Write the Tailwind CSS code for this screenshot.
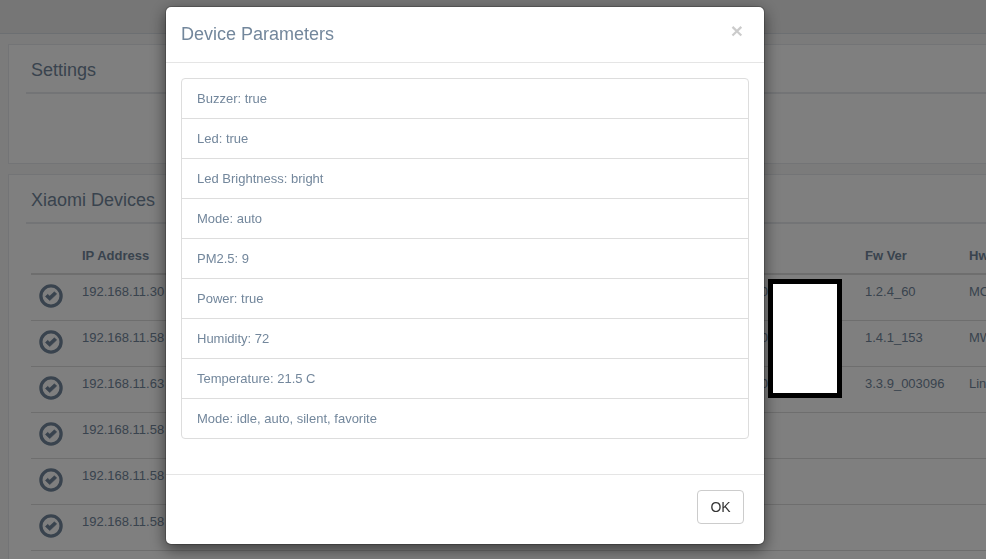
<!DOCTYPE html>
<html lang="en">
<head>
<meta charset="utf-8">
<title>Xiaomi Devices</title>
<script src="https://cdn.jsdelivr.net/npm/@tailwindcss/browser@4"></script>
</head>
<body class="h-screen overflow-hidden bg-[#f7f7f7] font-['Liberation_Sans',Arial,sans-serif] text-[13px] leading-[19px] text-[#73879c]">
<svg class="hidden" aria-hidden="true">
  <symbol id="check" viewBox="0 0 24 24">
    <circle cx="12" cy="12" r="10.100" fill="none" stroke="currentColor" stroke-width="3.300"/>
    <path fill="currentColor" stroke="currentColor" stroke-width="0.600" stroke-linejoin="round" d="M6.400 12.500L8.600 10.300L10.700 12.100L15.400 7.700L17.700 10L10.700 16.600Z"/>
  </symbol>
</svg>

<header class="h-[34px] border-b border-[#d9dee4] bg-[#ededed]"></header>

<main class="flex flex-col gap-2.5 pt-2.5 pl-2">
  <section class="min-h-[120px] border border-r-0 border-[#e6e9ed] bg-white pt-2.5 pb-2.5 pl-[17px]">
    <h2 class="h-[39px] border-b-2 border-[#e6e9ed] pt-1 pl-[5px] text-[18px] leading-[22px]">Settings</h2>
  </section>

  <section class="border border-r-0 border-[#e6e9ed] bg-white pt-2.5 pb-12 pl-[17px]">
    <h2 class="h-[39px] border-b-2 border-[#e6e9ed] pt-1 pl-[5px] text-[18px] leading-[22px]">Xiaomi Devices</h2>
    <div class="mt-3.5 pl-[5px]">
      <table class="w-full table-fixed border-separate border-spacing-0 text-left [&_td]:whitespace-nowrap [&_td]:border-b [&_td]:border-[#ddd] [&_td]:px-2 [&_td]:pt-[7px] [&_td]:pb-[19px] [&_td]:align-top [&_th]:whitespace-nowrap [&_th]:border-b-2 [&_th]:border-[#ddd] [&_th]:p-2">
        <colgroup><col class="w-[43px]"><col class="w-[240px]"><col><col class="w-[81px]"><col class="w-[104px]"><col class="w-[25px]"></colgroup>
        <thead>
          <tr><th></th><th>IP Address</th><th></th><th></th><th>Fw Ver</th><th>Hw</th></tr>
        </thead>
        <tbody>
          <tr><td><svg class="mt-0.5 -mb-[7px] size-6"><use href="#check"/></svg></td><td>192.168.11.30</td><td class="text-right">0</td><td></td><td>1.2.4_60</td><td>MC</td></tr>
          <tr><td><svg class="mt-0.5 -mb-[7px] size-6"><use href="#check"/></svg></td><td>192.168.11.58</td><td class="text-right">0</td><td></td><td>1.4.1_153</td><td>MW</td></tr>
          <tr><td><svg class="mt-0.5 -mb-[7px] size-6"><use href="#check"/></svg></td><td>192.168.11.63</td><td class="text-right">0</td><td></td><td>3.3.9_003096</td><td>Lin</td></tr>
          <tr><td><svg class="mt-0.5 -mb-[7px] size-6"><use href="#check"/></svg></td><td>192.168.11.58</td><td></td><td></td><td></td><td></td></tr>
          <tr><td><svg class="mt-0.5 -mb-[7px] size-6"><use href="#check"/></svg></td><td>192.168.11.58</td><td></td><td></td><td></td><td></td></tr>
          <tr><td><svg class="mt-0.5 -mb-[7px] size-6"><use href="#check"/></svg></td><td>192.168.11.58</td><td></td><td></td><td></td><td></td></tr>
        </tbody>
      </table>
    </div>
  </section>
</main>

<div class="fixed inset-0 bg-black/50"></div>

<div class="fixed inset-0 flex items-start justify-center pt-1.5 pr-14">
  <div role="dialog" aria-modal="true" aria-labelledby="dialog-title" class="w-full max-w-[600px] rounded-md border border-black/20 bg-white bg-clip-padding shadow-[0_5px_15px_rgba(0,0,0,0.5)]">
    <div class="flex items-start justify-between border-b border-[#e5e5e5] p-[15px]">
      <h4 id="dialog-title" class="text-[18px] leading-[25px]">Device Parameters</h4>
      <button type="button" aria-label="Close" class="mr-1.5 -mt-0.5 text-[21px] leading-[21px] font-bold text-black opacity-20">×</button>
    </div>
    <div class="px-[15px] pt-[15px] pb-[35px]">
      <ul class="divide-y divide-[#ddd] rounded border border-[#ddd] [&>li]:px-[15px] [&>li]:py-2.5">
        <li>Buzzer: true</li>
        <li>Led: true</li>
        <li>Led Brightness: bright</li>
        <li>Mode: auto</li>
        <li>PM2.5: 9</li>
        <li>Power: true</li>
        <li>Humidity: 72</li>
        <li>Temperature: 21.5 C</li>
        <li>Mode: idle, auto, silent, favorite</li>
      </ul>
    </div>
    <div class="flex justify-end border-t border-[#e5e5e5] px-5 pt-[15px] pb-5">
      <button type="button" class="min-w-[47px] rounded border border-[#ccc] bg-white px-3 py-1.5 text-[14px] leading-5 text-[#333]">OK</button>
    </div>
  </div>
</div>

<div class="absolute top-[279px] right-36 h-[119px] w-[74px] border-5 border-black bg-white"></div>
</body>
</html>
